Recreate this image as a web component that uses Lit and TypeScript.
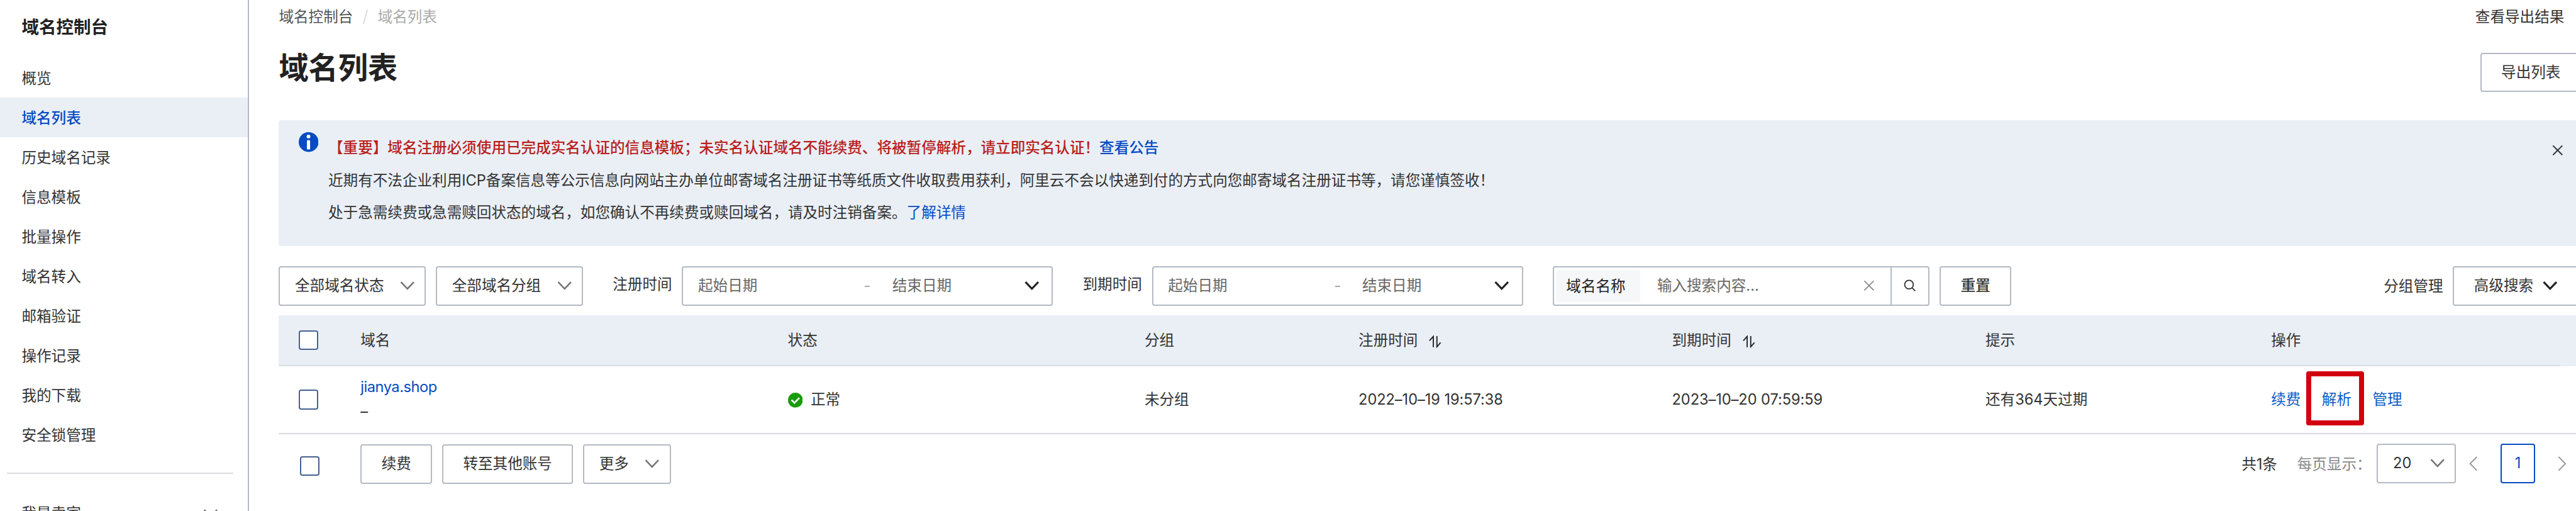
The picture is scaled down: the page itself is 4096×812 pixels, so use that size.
import { LitElement, html, css, svg } from "lit";
import { customElement } from "lit/decorators.js";

const MENU = ["概览", "域名列表", "历史域名记录", "信息模板", "批量操作", "域名转入", "邮箱验证", "操作记录", "我的下载", "安全锁管理"];

const chevron = (kind = "") => html`<svg class="chev ${kind}" width="24" height="14" viewBox="0 0 24 14">
  <path d="M1.6 1.2 L12 12 L22.4 1.2" /></svg>`;

const sortIcon = html`<svg class="sort" width="20" height="20" viewBox="0 0 20 20">
  <path d="M1 8.4 L7.2 1.6 V19 M13 1 V18.4 L19 11.6" /></svg>`;

const cross = (size: number, kind: string) => html`<svg class="cross ${kind}" width=${size} height=${size} viewBox="0 0 18 18">
  <path d="M1.4 1.4 L16.6 16.6 M16.6 1.4 L1.4 16.6" /></svg>`;

const arrow = (d: string) => html`<svg class="arrow" width="14" height="24" viewBox="0 0 14 24">${svg`<path d=${d} />`}</svg>`;

@customElement("app-root")
export class AppRoot extends LitElement {
  static styles = css`
    :host { display: block; width: 4096px; height: 812px; overflow: hidden; background: #fff; }
    *, *::after { box-sizing: border-box; }
    svg { display: block; flex: none; fill: none; }
    .page {
      zoom: 0.9832; width: 4166px; height: 826px; overflow: hidden; display: flex;
      font: 24px/36px "Inter", "Noto Sans CJK SC", sans-serif; color: #333; white-space: nowrap;
      background: #fff;
    }
    .side { width: 403px; flex: none; border-right: 2.04px solid #b3bac3; height: 826px; overflow: hidden; }
    .side-title { height: 94px; padding: 24px 0 0 35px; font-size: 28px; line-height: 40px; font-weight: 700; color: #222; }
    .item { height: 64px; line-height: 64px; padding: 2px 0 0 35px; }
    .item.on { background: #eaeff6; color: #064bc4; font-weight: 500; }
    .side-line { height: 2.04px; background: #dadce2; margin: 30px 24px 0 11px; }
    .side-group { height: 64px; margin-top: 32px; padding: 0 48px 0 35px; display: flex; align-items: center; justify-content: space-between; }

    .main { flex: none; width: 3763px; padding-left: 48px; overflow: hidden; }
    .crumbs { height: 52px; display: flex; align-items: center; justify-content: space-between; padding: 2px 19px 0 0; }
    .crumb { display: flex; color: #555; }
    .crumb .sep { width: 40px; display: flex; justify-content: center; align-items: center; }
    .crumb .last { color: #aaa; }
    .sep svg path { stroke: #d2d2d2; stroke-width: 1.6; }
    .head { height: 142px; display: flex; justify-content: space-between; }
    h1 { margin: 26px 0 0; font-size: 48px; line-height: 64px; font-weight: 700; color: #222; height: 64px; }
    .btn {
      height: 64px; border: 2.04px solid #b3bac3; border-radius: 4px; background: #fff; flex: none;
      padding: 0 32px; line-height: 60px; display: flex; align-items: center; color: #333;
    }
    .head .btn { margin-top: 33px; width: 164px; margin-right: -9px; }

    .notice { height: 204px; background: #eaeff6; border-radius: 4px 0 0 4px; display: flex; padding: 18px 21px 0 32px; }
    .notice .info { margin-top: 2px; }
    .notice .lines { margin-left: 16px; flex: 1; line-height: 52px; padding-top: 1px; }
    .warn { color: #b9211c; font-weight: 500; }
    .warn a { font-weight: 500; }
    a { color: #064bc4; }
    .notice .cross { margin-top: 22px; }
    .cross path { stroke: #333; stroke-width: 2; }
    .cross.soft path { stroke: #888; stroke-width: 1.7; }

    .filters { margin-top: 32px; height: 64px; display: flex; }
    .select { width: 238px; padding: 0 16px 0 24px; justify-content: space-between; }
    .gap16 { margin-left: 16px; }
    .chev path { stroke: #757575; stroke-width: 2.6; }
    .chev.dark path { stroke: #222; stroke-width: 3.2; }
    .label { margin-left: 48px; width: 112px; line-height: 60px; }
    .range { width: 600px; padding: 0 20px 0 24px; color: #666; }
    .range .from { width: 270px; }
    .range .dash { width: 8px; height: 2.04px; background: #aaa; margin: 2px 36px 0 0; }
    .range .to { flex: 1; }
    .search { margin-left: 48px; width: 610px; padding: 0; }
    .chip { height: 52px; line-height: 53px; margin-left: 4px; width: 136px; padding-left: 16px; background: #f6f7f9; border-radius: 4px; color: #222; }
    .search .ph { margin-left: 27px; flex: 1; color: #666; }
    .search .cross { margin-right: 25px; }
    .go { width: 62px; height: 60px; border-left: 2.04px solid #b3bac3; display: flex; align-items: center; justify-content: center; }
    .go svg path { stroke: #333; stroke-width: 1.9; }
    .reset { width: 116px; font-weight: 500; }
    .spacer { flex: 1; }
    .manage { width: 112px; line-height: 65px; }
    .adv { width: 209px; margin-right: -10px; }
    .adv .chev { margin-left: 15px; }

    .grid { display: grid; grid-template-columns: 132px 691px 577px 346px 507px 507px 462px 1fr; align-items: center; }
    .thead { margin-top: 16px; height: 82px; background: linear-gradient(#dadce2, #dadce2) 0 100% / 3690px 2.04px no-repeat #eaeff6; padding-bottom: 2px; }
    .trow { height: 110px; border-bottom: 2.04px solid #dadce2; }
    .check { width: 32px; height: 32px; margin-left: 32px; border: 2.04px solid #45628f; border-radius: 4px; background: #fff; flex: none; }
    .th { display: flex; align-items: center; }
    .th .sort { margin: 5px 0 0 18px; }
    .sort path { stroke: #222; stroke-width: 1.9; }
    .name { line-height: 40px; padding-bottom: 2px; }
    .name a { letter-spacing: -0.45px; }
    .date { letter-spacing: -0.05px; }
    .status { display: flex; align-items: center; gap: 13px; }
    .status svg { margin-top: 2px; }
    .ops { display: flex; gap: 34px; }
    .ops a { color: #0a5cc8; }
    .mark { position: relative; }
    .mark::after {
      content: ""; position: absolute; left: -25px; top: -28px; width: 93px; height: 88px;
      border: 8.14px solid #d3000f; border-radius: 4px;
    }

    .foot { height: 96px; padding-top: 15px; display: flex; align-items: flex-start; }
    .foot .check { margin: 20px 66px 0 34px; }
    .foot .btn { margin: 1px 16px 0 0; }
    .more { width: 142px; padding: 0 16px 0 24px !important; justify-content: space-between; }
    .total { line-height: 67px; width: 90px; }
    .per { line-height: 67px; width: 129px; color: #888; }
    .size { width: 128px; height: 64px; justify-content: space-between; padding: 0 16px 0 24px; }
    .foot .size { margin: 0; }
    .foot .cur { width: 56px; padding: 0; justify-content: center; border-color: #064bc4; color: #064bc4; margin: 0 36px 0 37px; }
    .arrow { margin-top: 20px; }
    .size + .arrow { margin-left: 21px; }
    .foot .arrow:last-child { margin-right: 16px; }
    .arrow path { stroke: #999; stroke-width: 2; }
  `;

  private range(label: string) {
    return html`<div class="label">${label}</div>
      <div class="btn range"><span class="from">起始日期</span><span class="dash"></span><span class="to">结束日期</span>${chevron("dark")}</div>`;
  }

  render() {
    return html`<div class="page" lang="zh-CN">
      <nav class="side">
        <div class="side-title">域名控制台</div>
        ${MENU.map((m, i) => html`<div class="item ${i === 1 ? "on" : ""}">${m}</div>`)}
        <div class="side-line"></div>
        <div class="side-group"><span>我是卖家</span>${chevron()}</div>
      </nav>
      <main class="main">
        <div class="crumbs">
          <div class="crumb"><span>域名控制台</span><span class="sep"><svg width="8" height="24" viewBox="0 0 8 24"><path d="M7.4 0.5 L0.8 23.5" /></svg></span><span class="last">域名列表</span></div>
          <span>查看导出结果</span>
        </div>
        <div class="head"><h1>域名列表</h1><div class="btn">导出列表</div></div>
        <section class="notice">
          <svg class="info" width="32" height="32" viewBox="0 0 32 32"><circle cx="16" cy="16" r="16" fill="#064bc4" /><circle cx="15.8" cy="7" r="3" fill="#fff" /><rect x="13.2" y="13" width="5.2" height="15" rx="1" fill="#fff" /></svg>
          <div class="lines">
            <div class="warn">【重要】域名注册必须使用已完成实名认证的信息模板；未实名认证域名不能续费、将被暂停解析，请立即实名认证！<a>查看公告</a></div>
            <div>近期有不法企业利用ICP备案信息等公示信息向网站主办单位邮寄域名注册证书等纸质文件收取费用获利，阿里云不会以快递到付的方式向您邮寄域名注册证书等，请您谨慎签收！</div>
            <div>处于急需续费或急需赎回状态的域名，如您确认不再续费或赎回域名，请及时注销备案。<a>了解详情</a></div>
          </div>
          ${cross(18, "")}
        </section>
        <div class="filters">
          <div class="btn select">全部域名状态${chevron()}</div>
          <div class="btn select gap16">全部域名分组${chevron()}</div>
          ${this.range("注册时间")}${this.range("到期时间")}
          <div class="btn search"><span class="chip">域名名称</span><span class="ph">输入搜索内容...</span>${cross(18, "soft")}
            <span class="go"><svg width="20" height="20" viewBox="0 0 20 20"><path d="M8.6 1.4 a7 7 0 1 1 0 14 a7 7 0 1 1 0 -14 M13.4 13.4 L18.6 18.8" /></svg></span></div>
          <div class="btn reset gap16">重置</div>
          <div class="spacer"></div>
          <div class="manage">分组管理</div>
          <div class="btn adv">高级搜索${chevron("dark")}</div>
        </div>
        <div class="grid thead">
          <div class="check"></div><div>域名</div><div>状态</div><div>分组</div>
          <div class="th">注册时间${sortIcon}</div><div class="th">到期时间${sortIcon}</div><div>提示</div><div>操作</div>
        </div>
        <div class="grid trow">
          <div class="check"></div>
          <div class="name"><a>jianya.shop</a><div>–</div></div>
          <div class="status"><svg width="24" height="24" viewBox="0 0 24 24"><circle cx="12" cy="12" r="12" fill="#189c0a" /><path d="M5.6 11.6 L10.4 16.4 L18.2 8.4" stroke="#fff" stroke-width="2.8" /></svg>正常</div>
          <div>未分组</div>
          <div class="date">2022–10–19 19:57:38</div>
          <div class="date">2023–10–20 07:59:59</div>
          <div>还有364天过期</div>
          <div class="ops"><a>续费</a><a class="mark">解析</a><a>管理</a></div>
        </div>
        <div class="foot">
          <div class="check"></div>
          <div class="btn">续费</div><div class="btn">转至其他账号</div><div class="btn more">更多${chevron()}</div>
          <div class="spacer"></div>
          <div class="total">共1条</div><div class="per">每页显示：</div>
          <div class="btn size">20${chevron()}</div>
          ${arrow("M12.6 1 L1.6 12 L12.6 23")}
          <div class="btn cur">1</div>
          ${arrow("M1.4 1 L12.4 12 L1.4 23")}
        </div>
      </main>
    </div>`;
  }
}
